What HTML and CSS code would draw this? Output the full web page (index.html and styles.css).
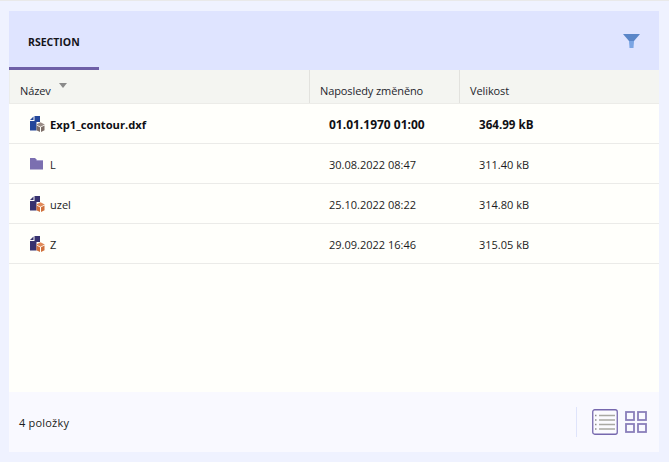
FILE: index.html
```html
<!DOCTYPE html>
<html lang="cs">
<head>
<meta charset="utf-8">
<title>RSECTION</title>
<link rel="stylesheet" href="styles.css">
</head>
<body>
<main class="card">
  <header class="top">
    <div class="tab">RSECTION</div>
    <svg class="filter" width="17" height="15" viewBox="0 0 17 15">
      <path d="M0 0H17L11 7H6Z" fill="#5b86c8"/>
      <path d="M6 7H11L10.500 14H6.500Z" fill="#7ba5e4"/>
    </svg>
  </header>
  <div class="row head">
    <div class="cell name">Název<span class="sort"></span></div>
    <div class="cell date">Naposledy změněno</div>
    <div class="cell size">Velikost</div>
  </div>
  <div class="body">
    <div class="row item bold">
      <div class="cell name">
        <svg class="icon" width="15" height="16" viewBox="0 0 15 16"><path d="M0 4 3.500 0.500V4Z" fill="#24479a"/><path d="M4.500 0H10V6H6.500V14.500H0V5H4.500Z" fill="#24479a"/><path d="M10.500 6.300 14.800 8.500 10.500 10.700 6.200 8.500Z" fill="#9a8c86"/><path d="M6.500 9.500 10 11.300V16L6.500 14.200ZM11 11.300 14.500 9.500V14.200L11 16Z" fill="#7d6e68"/></svg>
        <span>Exp1_contour.dxf</span>
      </div>
      <div class="cell date">01.01.1970 01:00</div>
      <div class="cell size">364.99 kB</div>
    </div>
    <div class="row item">
      <div class="cell name">
        <svg class="icon" width="15" height="16" viewBox="0 0 15 16"><path d="M0 2H5L7 4H13V13.500H0Z" fill="#7b6fb0"/><path d="M0 5H13V4H7L6 5Z" fill="#a79fd0"/></svg>
        <span>L</span>
      </div>
      <div class="cell date">30.08.2022 08:47</div>
      <div class="cell size">311.40 kB</div>
    </div>
    <div class="row item">
      <div class="cell name">
        <svg class="icon" width="15" height="16" viewBox="0 0 15 16"><path d="M0 4 3.500 0.500V4Z" fill="#37326f"/><path d="M4.500 0H10V6H6.500V14.500H0V5H4.500Z" fill="#37326f"/><path d="M10.500 6.300 14.800 8.500 10.500 10.700 6.200 8.500Z" fill="#e08a5a"/><path d="M6.500 9.500 10 11.300V16L6.500 14.200ZM11 11.300 14.500 9.500V14.200L11 16Z" fill="#d0703c"/></svg>
        <span>uzel</span>
      </div>
      <div class="cell date">25.10.2022 08:22</div>
      <div class="cell size">314.80 kB</div>
    </div>
    <div class="row item">
      <div class="cell name">
        <svg class="icon" width="15" height="16" viewBox="0 0 15 16"><path d="M0 4 3.500 0.500V4Z" fill="#37326f"/><path d="M4.500 0H10V6H6.500V14.500H0V5H4.500Z" fill="#37326f"/><path d="M10.500 6.300 14.800 8.500 10.500 10.700 6.200 8.500Z" fill="#e08a5a"/><path d="M6.500 9.500 10 11.300V16L6.500 14.200ZM11 11.300 14.500 9.500V14.200L11 16Z" fill="#d0703c"/></svg>
        <span>Z</span>
      </div>
      <div class="cell date">29.09.2022 16:46</div>
      <div class="cell size">315.05 kB</div>
    </div>
  </div>
  <footer class="foot">
    <span class="count">4 položky</span>
    <div class="views">
      <span class="divider"></span>
      <svg width="26" height="26" viewBox="0 0 26 26">
        <rect x="0.750" y="0.750" width="24.500" height="24.500" rx="2" fill="#fbfbff" stroke="#7668ae" stroke-width="1.300"/>
        <path d="M7 6.500H23M7 11H23M7 15.500H23M7 20H23" stroke="#a9a9a3" stroke-width="1.300"/>
        <path d="M3 6.500H4.500M3 11H4.500M3 15.500H4.500M3 20H4.500" stroke="#8f8f8a" stroke-width="1.300"/>
      </svg>
      <svg class="grid" width="22" height="22" viewBox="0 0 22 22" fill="none" stroke="#7668ae" stroke-width="1.800" stroke-opacity="0.850">
        <rect x="1" y="1" width="8" height="8"/><rect x="13" y="1" width="8" height="8"/>
        <rect x="1" y="13" width="8" height="8"/><rect x="13" y="13" width="8" height="8"/>
      </svg>
    </div>
  </footer>
</main>
</body>
</html>
```
FILE: styles.css
```css
* { box-sizing: border-box; }
html, body { height: 100%; }
body {
  margin: 0;
  background: #eff2ff;
  border-top: 1px solid #e9e9e9;
  padding: 10px 10px 10px 9px;
  font-family: "Open Sans", "Noto Sans", sans-serif;
  font-size: 11px;
  color: #1c1c20;
  overflow: hidden;
}
.card {
  height: 441px;
  display: flex;
  flex-direction: column;
  background: #fffffb;
}
.top {
  height: 59px;
  flex: none;
  background: #dfe4ff;
  display: flex;
  align-items: stretch;
  justify-content: space-between;
}
.tab {
  width: 90px;
  padding-top: 24px;
  padding-left: 19px;
  font-weight: 700;
  font-size: 10.500px;
  color: #15151a;
  border-bottom: 3px solid #6e5fa7;
  white-space: nowrap;
}
.filter { margin: 23px 19px 0 0; }
.row { display: flex; }
.head {
  height: 34px;
  flex: none;
  background: #f4f5f1;
  border-left: 1px solid #ecedea;
  border-bottom: 1px solid #ecece8;
  letter-spacing: -0.100px;
  color: #25252d;
}
.head .cell { padding: 8px 0 0 10px; line-height: 26px; }
.head .name { width: 299px; }
.head .date { width: 150px; border-left: 1px solid #e2e2de; }
.head .size { border-left: 1px solid #e2e2de; }
.sort {
  display: inline-block;
  vertical-align: 7px;
  margin-left: 8px;
  border: 4px solid transparent;
  border-top: 5px solid #8a8a8a;
  border-bottom: 0;
}
.body { flex: 1; }
.item {
  height: 40px;
  align-items: center;
  border-bottom: 1px solid #ebebe8;
  padding-top: 1px;
  font-size: 11px;
  color: #1c1c22;
}
.item .name {
  width: 301px;
  padding-left: 21px;
  display: flex;
  align-items: center;
  gap: 5px;
}
.item .date { width: 150px; padding-left: 19px; }
.item .size { padding-left: 19px; }
.bold { font-weight: 700; color: #0f0f14; }
.bold .name { font-size: 11.200px; }
.bold .date { font-size: 12px; }
.bold .size { font-size: 11.600px; }
.icon { flex: none; overflow: visible; }
.foot {
  height: 60px;
  flex: none;
  background: #f9f9ff;
  display: flex;
  align-items: center;
  justify-content: space-between;
  padding: 0 12px 0 10px;
}
.count { font-size: 11px; letter-spacing: 0.200px; padding-top: 1px; }
.views { display: flex; align-items: center; gap: 7px; margin-top: -1px; }
.divider { width: 1px; height: 30px; background: #dfe4fb; margin-right: 8px; }
```
